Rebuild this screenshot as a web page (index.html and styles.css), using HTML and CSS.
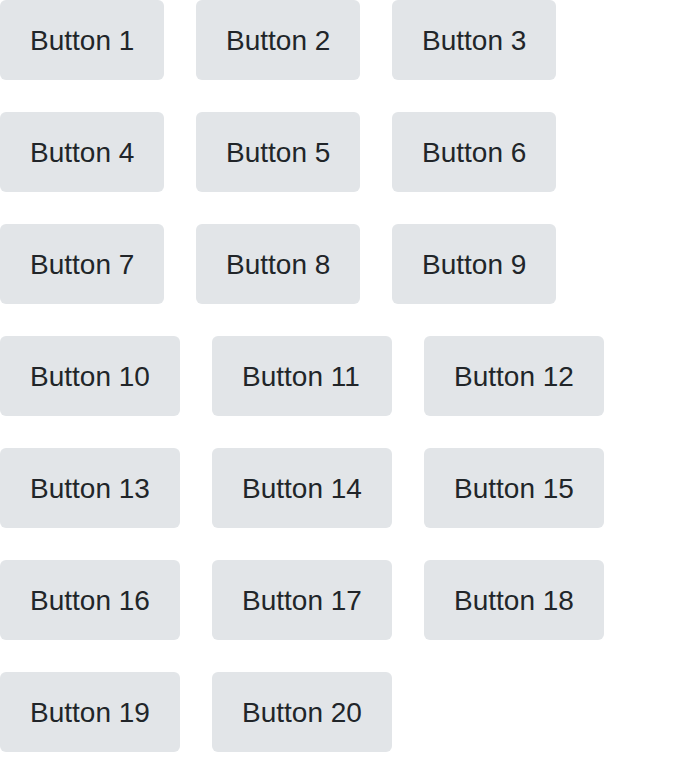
FILE: index.html
```html
<!DOCTYPE html>
<html>
<head>
<meta charset="utf-8">
<link rel="stylesheet" href="styles.css">
</head>
<body>
<div class="grid">
<button class="btn">Button 1</button>
<button class="btn">Button 2</button>
<button class="btn">Button 3</button>
<button class="btn">Button 4</button>
<button class="btn">Button 5</button>
<button class="btn">Button 6</button>
<button class="btn">Button 7</button>
<button class="btn">Button 8</button>
<button class="btn">Button 9</button>
<button class="btn wide">Button 10</button>
<button class="btn wide">Button 11</button>
<button class="btn wide">Button 12</button>
<button class="btn wide">Button 13</button>
<button class="btn wide">Button 14</button>
<button class="btn wide">Button 15</button>
<button class="btn wide">Button 16</button>
<button class="btn wide">Button 17</button>
<button class="btn wide">Button 18</button>
<button class="btn wide">Button 19</button>
<button class="btn wide">Button 20</button>
</div>
</body>
</html>
```
FILE: styles.css
```css
html, body { margin: 0; padding: 0; background: #fff; }
.grid { display: flex; flex-wrap: wrap; gap: 32px; }
.btn {
  font-family: "Liberation Sans", Arial, sans-serif;
  font-size: 28px;
  line-height: 32px;
  padding: 25px 0 23px 30px;
  width: 164px;
  text-align: left;
  border: none;
  border-radius: 6px;
  background: #e2e5e8;
  color: #212529;
  margin: 0;
  white-space: nowrap;
}
.btn.wide { width: 180px; }
```
